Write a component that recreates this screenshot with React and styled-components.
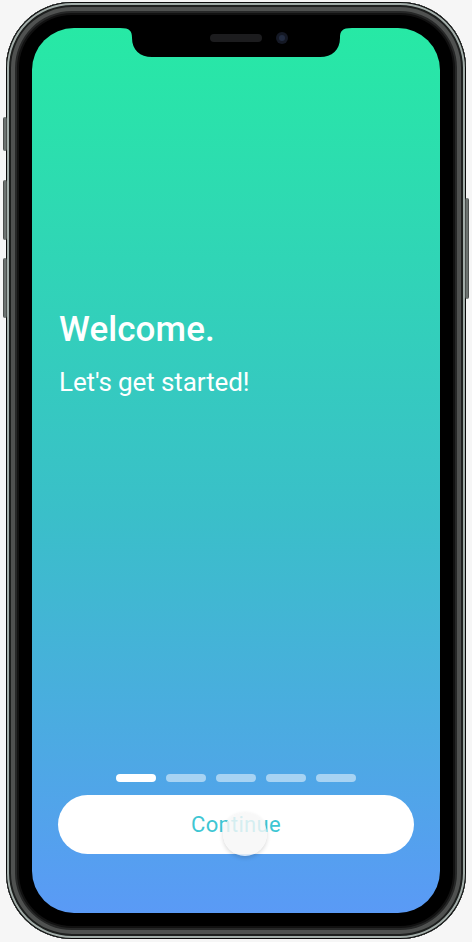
import React from 'react'
import styled, { createGlobalStyle } from 'styled-components'

const GlobalStyle = createGlobalStyle`
	html, body {
		margin: 0;
		padding: 0;
		background: #f6f6f6;
		font-family: 'Roboto', 'Liberation Sans', sans-serif;
	}
`

const Phone = styled.div`
	position: relative;
	box-sizing: border-box;
	width: 460px;
	height: 937px;
	margin: 2px 0 0 6px;
	padding: 26px;
	border-radius: 66px;
	background: #000;
	box-shadow:
		inset 0 0 0 1px #0c0c0c,
		inset 0 0 0 3px #a2ada9,
		inset 0 0 0 5px #1d1f1e,
		inset 0 0 0 9px #4f5150,
		inset 0 0 0 11px #262727,
		inset 0 0 0 13px #111;
`

const SideButton = styled.div`
	position: absolute;
	width: 4px;
	top: ${(p) => p.top}px;
	height: ${(p) => p.h}px;
	${(p) => (p.right ? 'right: -3px;' : 'left: -3px;')}
	background: linear-gradient(90deg, #3a3c3b, #7d8582, #3a3c3b);
	border-radius: 2px;
`

const Screen = styled.div`
	position: relative;
	height: 100%;
	border-radius: 42px;
	overflow: hidden;
	background: linear-gradient(180deg, #27e9a5 0%, #3abfc9 55%, #5a9af6 100%);
	display: flex;
	flex-direction: column;
	padding: 0 26px 59px;
	box-sizing: border-box;
`

const Notch = styled.svg`
	position: absolute;
	top: 0;
	left: 50%;
	transform: translateX(-50%);
`

const Intro = styled.div`
	padding: 282px 0 0 1px;
	color: #fff;
`

const Title = styled.h1`
	margin: 0;
	font-size: 35px;
	font-weight: 500;
	line-height: 40px;
	letter-spacing: 0.1px;
`

const Subtitle = styled.p`
	margin: 17px 0 0;
	font-size: 26px;
	font-weight: 400;
	line-height: 30px;
	letter-spacing: -0.1px;
`

const Spacer = styled.div`
	flex: 1;
`

const Dots = styled.div`
	display: flex;
	justify-content: center;
	gap: 10px;
	margin-bottom: 13px;
`

const Dot = styled.span`
	width: 40px;
	height: 8px;
	border-radius: 4px;
	background: ${(p) => (p.active ? '#fff' : 'rgba(255, 255, 255, 0.5)')};
`

const ContinueButton = styled.button`
	position: relative;
	height: 59px;
	width: 100%;
	border: none;
	border-radius: 30px;
	background: #fff;
	color: #3ec6d3;
	font-family: 'Roboto', 'Liberation Sans', sans-serif;
	font-size: 22px;
	font-weight: 400;
	letter-spacing: 0.3px;
	cursor: pointer;
`

const Touch = styled.span`
	position: absolute;
	left: 165px;
	top: 17px;
	width: 44px;
	height: 44px;
	border-radius: 50%;
	background: rgba(246, 246, 246, 0.82);
	box-shadow: 0 2px 4px rgba(0, 0, 0, 0.15);
`

export default function App() {
	return (
		<>
			<GlobalStyle />
			<Phone>
				<SideButton top={115} h={34} />
				<SideButton top={178} h={60} />
				<SideButton top={256} h={60} />
				<SideButton right top={196} h={101} />
				<Screen>
					<Notch width='232' height='30' viewBox='0 0 232 30'>
						<path
							d='M0 0 H232 C222 0 220 3 220 10 C220 22 212 29 200 29 H32 C20 29 12 22 12 10 C12 3 10 0 0 0 Z'
							fill='#000'
						/>
						<rect x='90' y='6' width='52' height='8' rx='4' fill='#1c1c1e' />
						<circle cx='162' cy='10' r='6' fill='#141824' />
						<circle cx='162' cy='10' r='3' fill='#222b40' />
					</Notch>
					<Intro>
						<Title>Welcome.</Title>
						<Subtitle>Let's get started!</Subtitle>
					</Intro>
					<Spacer />
					<Dots>
						<Dot active />
						<Dot />
						<Dot />
						<Dot />
						<Dot />
					</Dots>
					<ContinueButton>
						Continue
						<Touch />
					</ContinueButton>
				</Screen>
			</Phone>
		</>
	)
}
